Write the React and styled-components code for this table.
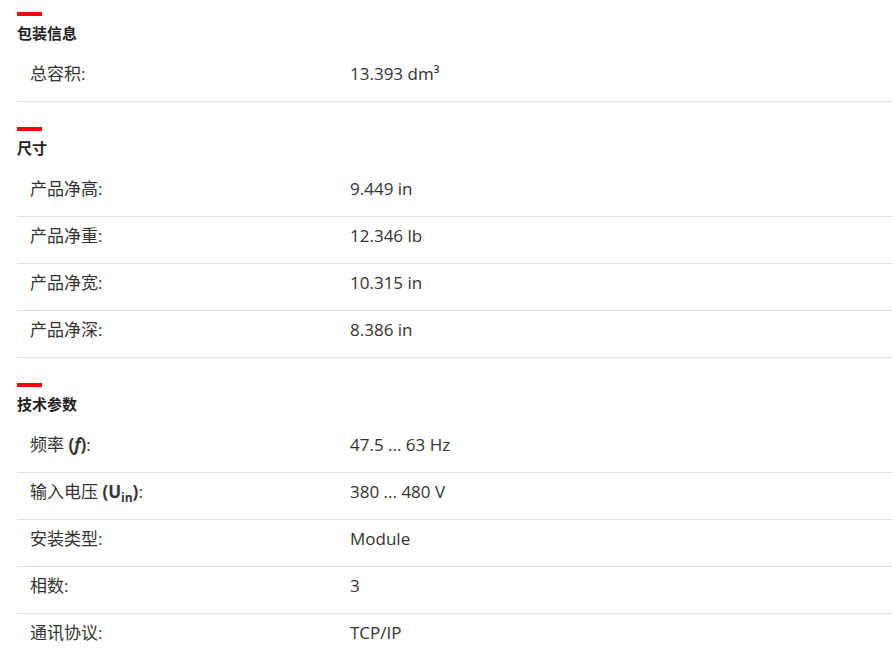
import React from 'react'
import styled, { createGlobalStyle } from 'styled-components';

const GlobalStyle = createGlobalStyle`
  body {
    margin: 0;
    background: #fff;
    font-family: "Open Sans", "Noto Sans CJK SC", sans-serif;
    color: #333;
  }
`;

const sections = [
  {
    title: '包装信息',
    rows: [
      { label: '总容积:', value: '13.393 dm³' },
    ],
  },
  {
    title: '尺寸',
    rows: [
      { label: '产品净高:', value: '9.449 in' },
      { label: '产品净重:', value: '12.346 lb' },
      { label: '产品净宽:', value: '10.315 in' },
      { label: '产品净深:', value: '8.386 in' },
    ],
  },
  {
    title: '技术参数',
    rows: [
      { label: <>频率 <b>(<i>f</i>)</b>:</>, value: '47.5 ... 63 Hz' },
      { label: <>输入电压 <b>(U<sub>in</sub>)</b>:</>, value: '380 ... 480 V' },
      { label: '安装类型:', value: 'Module' },
      { label: '相数:', value: '3' },
      { label: '通讯协议:', value: 'TCP/IP' },
    ],
  },
]

export default function App() {
  return (
    <Page>
      <GlobalStyle />
      {sections.map((s) => (
        <Section key={s.title}>
          <Heading>{s.title}</Heading>
          <Table>
            {s.rows.map((r, i) => (
              <Row key={i}>
                <Label>{r.label}</Label>
                <Value>{r.value}</Value>
              </Row>
            ))}
          </Table>
        </Section>
      ))}
    </Page>
  )
}

const Page = styled.div`
  padding: 12px 0 0 17px;
  overflow: hidden;
`;

const Section = styled.section`
  margin-bottom: 25px;
  &::before {
    content: '';
    display: block;
    width: 25px;
    height: 4px;
    background: #ff000f;
  }
`;

const Heading = styled.h3`
  margin: 6px 0 11px;
  font-size: 15px;
  line-height: 22px;
  font-weight: 700;
  color: #1f1f1f;
`;

const Table = styled.div`
  display: flex;
  flex-direction: column;
`;

const Row = styled.div`
  display: grid;
  grid-template-columns: 320px 1fr;
  padding: 7px 0 15px 13px;
  line-height: 24px;
  font-size: 17px;
  border-bottom: 1px solid #dfdfe3;

  b { font-weight: 700; }
  sub {
    font-size: 12px;
    line-height: 0;
    vertical-align: -4px;
  }
`;

const Label = styled.div`
  color: #333;
`;

const Value = styled.div`
  color: #333;
`;
